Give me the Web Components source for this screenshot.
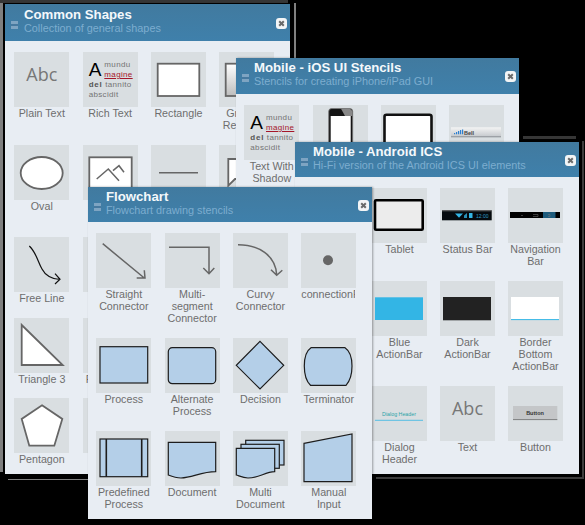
<!DOCTYPE html>
<html>
<head>
<meta charset="utf-8">
<title>Stencils</title>
<style>
    html, body { margin: 0; height: 100%; background: #000; overflow: hidden; }
    body { font-family: "Liberation Sans", Arial, sans-serif; }
    svg { display: block; width: 55px; height: 55px; }
    .ln { fill: none; stroke: #666; stroke-width: 1.5; }
    .wh { fill: #fff; stroke: #666; stroke-width: 1.8; }
    .bl { fill: #b4cfe8; stroke: #1d1d1d; stroke-width: 1.2; }
    .tiny { font-family: "Liberation Sans", sans-serif; font-weight: bold; }
</style>
</head>
<body>

<template id="panel-tpl">
<style>
    :host { display: block; position: absolute; }
    .side {
        position: absolute;
        top: -5px;
        left: -5px;
        bottom: 2px;
        width: var(--side-width, 0);
        background: #7f7f7f;
    }
    .frame {
        position: absolute;
        top: -1px;
        left: var(--frame-left, 0);
        right: var(--frame-right, 0);
        bottom: var(--frame-bottom, 0);
        border-right: 2px solid var(--frame-color, #777);
        border-bottom: var(--frame-bw, 1px) solid var(--frame-color, #777);
    }
    .strip {
        position: absolute;
        top: var(--strip-top, -6px);
        left: var(--strip-left, 0);
        right: var(--strip-right, 2px);
        height: 3px;
        background: #363636;
    }
    .panel {
        position: relative;
        height: 100%;
        display: flex;
        flex-direction: column;
        overflow: hidden;
        background: #e8edf3;
        box-shadow: 1px 0 2px rgba(0, 0, 0, .35);
    }
    .header {
        flex: none;
        height: var(--head-height, 36px);
        display: flex;
        align-items: center;
        padding: 0 3px 0 6px;
        background: linear-gradient(#417a9f, #3f80ab);
    }
    .minus {
        flex: none;
        width: 7px;
        height: 8px;
        margin: 4px var(--minus-gap, 5px) 0 0;
        background: linear-gradient(#7ea4c2 0 3px, #47799f 3px 5px, #7ea4c2 5px);
    }
    .titles { flex: 1; min-width: 0; margin-top: var(--title-shift, -3px); }
    .title {
        font-size: 13.2px;
        line-height: 14px;
        font-weight: bold;
        color: #f4f8fb;
    }
    .sub {
        font-size: 10.85px;
        line-height: 13px;
        color: #7dadcf;
        white-space: nowrap;
    }
    .close {
        flex: none;
        width: 11px;
        height: 11px;
        margin-top: 1px;
    }
    .close svg { display: block; width: 11px; height: 11px; }
    .grid {
        flex: 1;
        display: grid;
        grid-template-columns: repeat(4, 55px);
        column-gap: var(--col-gap, 13.33px);
        row-gap: var(--row-gap, 13.5px);
        align-content: start;
        padding: var(--grid-top, 11px) 0 0 var(--grid-left, 8.3px);
    }
</style>
<div class="side"></div>
<div class="strip"></div>
<div class="frame"></div>
<div class="panel">
    <div class="header">
        <div class="minus"></div>
        <div class="titles">
            <div class="title"></div>
            <div class="sub"></div>
        </div>
        <div class="close">
            <svg viewBox="0 0 11 11">
                <rect width="11" height="11" rx="3" fill="#f3f5f6"/>
                <path d="M3.2 3.2l4.6 4.6M7.8 3.2l-4.6 4.6" stroke="#6a6a6a" stroke-width="2"/>
            </svg>
        </div>
    </div>
    <div class="grid"><slot></slot></div>
</div>
</template>

<template id="tile-tpl">
<style>
    :host { display: block; width: 55px; }
    .thumb { width: 55px; height: 55px; background: #d9dee1; overflow: hidden; }
    .label {
        font-size: 10.7px;
        line-height: 12px;
        color: #6e6e6e;
        text-align: center;
        overflow: hidden;
        margin-right: var(--label-cut, 0);
        min-height: var(--label-min, 12px);
    }
</style>
<div class="thumb"><slot></slot></div>
<div class="label"></div>
</template>

<template id="abc-tpl">
<style>
    :host {
        display: block;
        height: 55px;
        text-align: center;
        font: 18px/45px "Open Sans", sans-serif;
        color: #777;
    }
</style>
Abc
</template>

<template id="rich-tpl">
<style>
    :host {
        display: block;
        height: 55px;
        box-sizing: border-box;
        padding: 8px 4px 0 6px;
        font-size: 8px;
        line-height: 10px;
        letter-spacing: .35px;
        color: #747474;
    }
    .big { float: left; font-size: 19px; line-height: 20px; color: #000; margin-right: 3px; letter-spacing: 0; }
    u { color: #a5162a; }
    b { color: #555; letter-spacing: .8px; }
</style>
<span class="big">A</span>mundu <u>magine</u> <b>del</b> tannito abscidit
</template>

<script>
    const panel_tpl = document.getElementById('panel-tpl');
    const tile_tpl = document.getElementById('tile-tpl');

    customElements.define('stencil-panel',
        class extends HTMLElement {
            constructor() {
                super();
                this.attachShadow({ mode: 'open' });
                this.shadowRoot.appendChild(panel_tpl.content.cloneNode(true));
            }
            connectedCallback() {
                this.shadowRoot.querySelector('.title').textContent = this.getAttribute('header');
                this.shadowRoot.querySelector('.sub').textContent = this.getAttribute('sub');
            }
        }
    );

    customElements.define('stencil-tile',
        class extends HTMLElement {
            constructor() {
                super();
                this.attachShadow({ mode: 'open' });
                this.shadowRoot.appendChild(tile_tpl.content.cloneNode(true));
            }
            connectedCallback() {
                this.shadowRoot.querySelector('.label').textContent = this.getAttribute('label');
            }
        }
    );

    // the two text thumbs have no svg, just their own little template
    [['abc-thumb', 'abc-tpl'], ['rich-thumb', 'rich-tpl']].forEach(([name, id]) => {
        customElements.define(name, class extends HTMLElement {
            constructor() {
                super();
                this.attachShadow({ mode: 'open' });
                this.shadowRoot.appendChild(document.getElementById(id).content.cloneNode(true));
            }
        });
    });
</script>

<stencil-panel header="Common Shapes" sub="Collection of general shapes"
    style="left:5px;top:4px;width:285px;height:470px;--head-height:37px;--grid-left:9.3px;--side-width:3px;--frame-left:3px;--frame-right:-6px;--frame-bottom:-6px;--strip-left:-5px;--strip-top:-4px;--frame-color:#808080;--minus-gap:6px;--title-shift:-1.5px">
    <stencil-tile label="Plain Text"><abc-thumb></abc-thumb></stencil-tile>
    <stencil-tile label="Rich Text"><rich-thumb></rich-thumb></stencil-tile>
    <stencil-tile label="Rectangle"><svg viewBox="0 0 55 55"><rect class="wh" x="6.7" y="11.7" width="41.6" height="32.3"/></svg></stencil-tile>
    <stencil-tile label="Gradient Rectangle"><svg viewBox="0 0 55 55"><defs><linearGradient id="grd" x1="0" y1="0" x2="0" y2="1"><stop offset="0" stop-color="#fff"/><stop offset="1" stop-color="#bdbdbd"/></linearGradient></defs><rect x="6.7" y="11.7" width="41.6" height="32.3" fill="url(#grd)" stroke="#666" stroke-width="1.8"/></svg></stencil-tile>

    <stencil-tile label="Oval"><svg viewBox="0 0 55 55"><ellipse class="wh" cx="27.7" cy="28" rx="21" ry="16"/></svg></stencil-tile>
    <stencil-tile><svg viewBox="0 0 55 55"><rect class="wh" x="6.3" y="12.3" width="42.4" height="32"/><path class="ln" d="M13.7 34L25.3 24L36 35.7M30 25.7L36 20.7L41 27.3"/></svg></stencil-tile>
    <stencil-tile><svg viewBox="0 0 55 55"><path class="ln" d="M8 27.7H47"/></svg></stencil-tile>
    <!-- label sits under the Flowchart panel, only its two line height shows -->
    <stencil-tile style="--label-min:24px"><svg viewBox="0 0 55 55"><path class="wh" d="M9.3 14H48V34H16L9.3 40.7Z"/></svg></stencil-tile>

    <stencil-tile label="Free Line"><svg viewBox="0 0 55 55"><path d="M15.3 9C22 15 24 25 28 32C31 38 38 42.5 46 42.5M41 36.7L46 42.3L41 47" fill="none" stroke="#111" stroke-width="1.2"/></svg></stencil-tile>
    <stencil-tile></stencil-tile>
    <stencil-tile></stencil-tile>
    <stencil-tile></stencil-tile>

    <stencil-tile label="Triangle 3"><svg viewBox="0 0 55 55"><path class="wh" d="M7.7 7L48.7 47H7.7Z"/></svg></stencil-tile>
    <stencil-tile label="Freeforms"></stencil-tile>
    <stencil-tile></stencil-tile>
    <stencil-tile></stencil-tile>

    <stencil-tile label="Pentagon"><svg viewBox="0 0 55 55"><path class="wh" d="M28 7.3L48.3 21L40.3 47.7H15.3L7.7 21Z"/></svg></stencil-tile>
    <stencil-tile></stencil-tile>
</stencil-panel>

<stencil-panel header="Mobile - iOS UI Stencils" sub="Stencils for creating iPhone/iPad GUI"
    style="left:236px;top:58px;width:283px;height:300px;--frame-color:transparent;--strip-top:0;--title-shift:-2.3px">
    <stencil-tile label="Text With Shadow"><rich-thumb></rich-thumb></stencil-tile>
    <stencil-tile><svg viewBox="0 0 55 55"><rect x="15.7" y="3.5" width="24" height="48" rx="3" fill="#151515" stroke="#777" stroke-width=".8"/><path d="M28 3.8H37L39.4 6V11H32Z" fill="#888"/><rect x="17.7" y="11" width="20" height="36" fill="#fff"/></svg></stencil-tile>
    <stencil-tile><svg viewBox="0 0 55 55"><rect x="3.5" y="9.8" width="47" height="38" rx="2" fill="#fff" stroke="#111" stroke-width="2.6"/></svg></stencil-tile>
    <stencil-tile><svg viewBox="0 0 55 55"><defs><linearGradient id="bell" x1="0" y1="0" x2="0" y2="1"><stop offset="0" stop-color="#f4f4f4"/><stop offset="1" stop-color="#c4c8cc"/></linearGradient></defs><rect x="2" y="22.3" width="50" height="9.5" fill="url(#bell)"/><path d="M2 31.8H52" stroke="#8b8f94"/><path d="M5 28h1.2v1.2H5zM7 27h1.2v2.2H7zM9 26h1.2v3.2H9zM11 25h1.2v4.2H11zM13 24.5h1.2v4.7H13z" fill="#2f80d0"/><text class="tiny" x="15" y="29.6" font-size="5.5" fill="#444">Bell</text></svg></stencil-tile>
</stencil-panel>

<stencil-panel header="Mobile - Android ICS" sub="Hi-Fi version of the Android ICS UI elements"
    style="left:295px;top:142px;width:284px;height:332px;--head-height:35px;--col-gap:13px;--row-gap:14px;--grid-left:9px;--grid-top:10.5px;--frame-right:-5px;--frame-bottom:-5px;--frame-left:81px;--frame-color:#3c3c3c;--frame-bw:2px;--strip-left:228px;--strip-right:3px">
    <stencil-tile></stencil-tile>
    <stencil-tile label="Tablet"><svg viewBox="0 0 55 55"><rect x="3" y="12.3" width="47.7" height="29.4" rx="1" fill="#ececec" stroke="#000" stroke-width="2.6"/></svg></stencil-tile>
    <stencil-tile label="Status Bar"><svg viewBox="0 0 55 55"><rect x="2" y="22.3" width="49.7" height="10" fill="#050a0e"/><path d="M2 22.8H51.7" stroke="#666"/><path d="M15 25.5H23L19 29.8Z" fill="#33b5e5"/><path d="M24 30V27.5L27 25V30Z" fill="#2a8fb5"/><rect x="29" y="25" width="3.5" height="5" fill="#33b5e5"/><text x="36" y="30" font-size="5" fill="#2f9cc6" font-family="Liberation Sans, sans-serif">12:00</text></svg></stencil-tile>
    <stencil-tile label="Navigation Bar"><svg viewBox="0 0 55 55"><rect x="2" y="24" width="50" height="6" fill="#000"/><rect x="35" y="24" width="12.5" height="6" fill="#1d5b7c"/><path d="M13 27.5h2M25 26.5h5v2h-5M40 26.5h2v2h-2" fill="none" stroke="#777" stroke-width=".5"/></svg></stencil-tile>

    <stencil-tile></stencil-tile>
    <stencil-tile label="Blue ActionBar"><svg viewBox="0 0 55 55"><rect x="3" y="16.3" width="48" height="22.7" fill="#33b5e5"/></svg></stencil-tile>
    <stencil-tile label="Dark ActionBar"><svg viewBox="0 0 55 55"><rect x="3" y="16" width="48" height="23.3" fill="#222"/></svg></stencil-tile>
    <stencil-tile label="Border Bottom ActionBar"><svg viewBox="0 0 55 55"><rect x="3" y="16" width="48" height="23" fill="#fff"/><path d="M3 38.6H51" stroke="#33b5e5"/></svg></stencil-tile>

    <stencil-tile></stencil-tile>
    <stencil-tile label="Dialog Header"><svg viewBox="0 0 55 55"><text x="27" y="29.5" text-anchor="middle" font-size="5.3" fill="#2aa4a8" font-family="Liberation Sans, sans-serif">Dialog Header</text><path d="M3 34.3H51" stroke="#33b5e5" stroke-width=".8"/></svg></stencil-tile>
    <stencil-tile label="Text"><abc-thumb></abc-thumb></stencil-tile>
    <stencil-tile label="Button"><svg viewBox="0 0 55 55"><rect x="5" y="20" width="44.3" height="14" fill="#c4c6c8"/><path d="M5 33.6H49.3" stroke="#7e8082"/><text class="tiny" x="27" y="28.8" text-anchor="middle" font-size="5.5" fill="#333">Button</text></svg></stencil-tile>
</stencil-panel>

<stencil-panel header="Flowchart" sub="Flowchart drawing stencils"
    style="left:88px;top:187px;width:284px;height:332px;--head-height:35px;--row-gap:14px;--frame-color:transparent;--strip-top:0">
    <stencil-tile label="Straight Connector"><svg viewBox="0 0 55 55"><path class="ln" d="M6.7 10.7L48.3 45M40.7 45H49L48.3 37.3"/></svg></stencil-tile>
    <stencil-tile label="Multi-segment Connector"><svg viewBox="0 0 55 55"><path class="ln" d="M4 14.3H44V40.7M38.3 35L44 40.7L49.3 35"/></svg></stencil-tile>
    <stencil-tile label="Curvy Connector"><svg viewBox="0 0 55 55"><path class="ln" d="M5 11.7C25 11.7 43 22 43.7 42.3M38 36.7L43.7 42.3L49.3 37.3"/></svg></stencil-tile>
    <stencil-tile label="connectionPoint" style="--label-cut:1px"><svg viewBox="0 0 55 55"><circle cx="27" cy="27.3" r="5" fill="#666"/></svg></stencil-tile>

    <stencil-tile label="Process"><svg viewBox="0 0 55 55"><rect class="bl" x="4" y="8.7" width="47.7" height="36.3"/></svg></stencil-tile>
    <stencil-tile label="Alternate Process"><svg viewBox="0 0 55 55"><rect class="bl" x="3.3" y="9.7" width="47.4" height="36" rx="4"/></svg></stencil-tile>
    <stencil-tile label="Decision"><svg viewBox="0 0 55 55"><path class="bl" d="M27 3.3L50.7 27.3L27 51L3.3 27.3Z"/></svg></stencil-tile>
    <stencil-tile label="Terminator"><svg viewBox="0 0 55 55"><path class="bl" d="M10 9.7H44C49 13 51 21 51 28C51 36 49 43 45 47.3H9.5C5 43 3.3 36 3.3 28C3.3 21 5 13 10 9.7Z"/></svg></stencil-tile>

    <stencil-tile label="Predefined Process"><svg viewBox="0 0 55 55"><rect class="bl" x="4" y="8" width="47.7" height="37.7"/><path d="M10.3 8V45.7M45.7 8V45.7" stroke="#1d1d1d" stroke-width="1.6"/></svg></stencil-tile>
    <stencil-tile label="Document"><svg viewBox="0 0 55 55"><path class="bl" d="M3.3 11.3H50.7V40.7C36 40.7 27 47 16 47C11 47 7 45.5 3.3 44Z"/></svg></stencil-tile>
    <stencil-tile label="Multi Document"><svg viewBox="0 0 55 55"><rect class="bl" x="12.7" y="9.3" width="38.3" height="24.7"/><rect class="bl" x="8" y="13.3" width="38.3" height="24"/><path class="bl" d="M3.3 17.3H41.7V40.7C32 41 26 47 15 47C10 47 6.5 45 3.3 44Z"/></svg></stencil-tile>
    <stencil-tile label="Manual Input"><svg viewBox="0 0 55 55"><path class="bl" d="M3 12.3L51 3V50.7H3Z"/></svg></stencil-tile>
</stencil-panel>

</body>
</html>
